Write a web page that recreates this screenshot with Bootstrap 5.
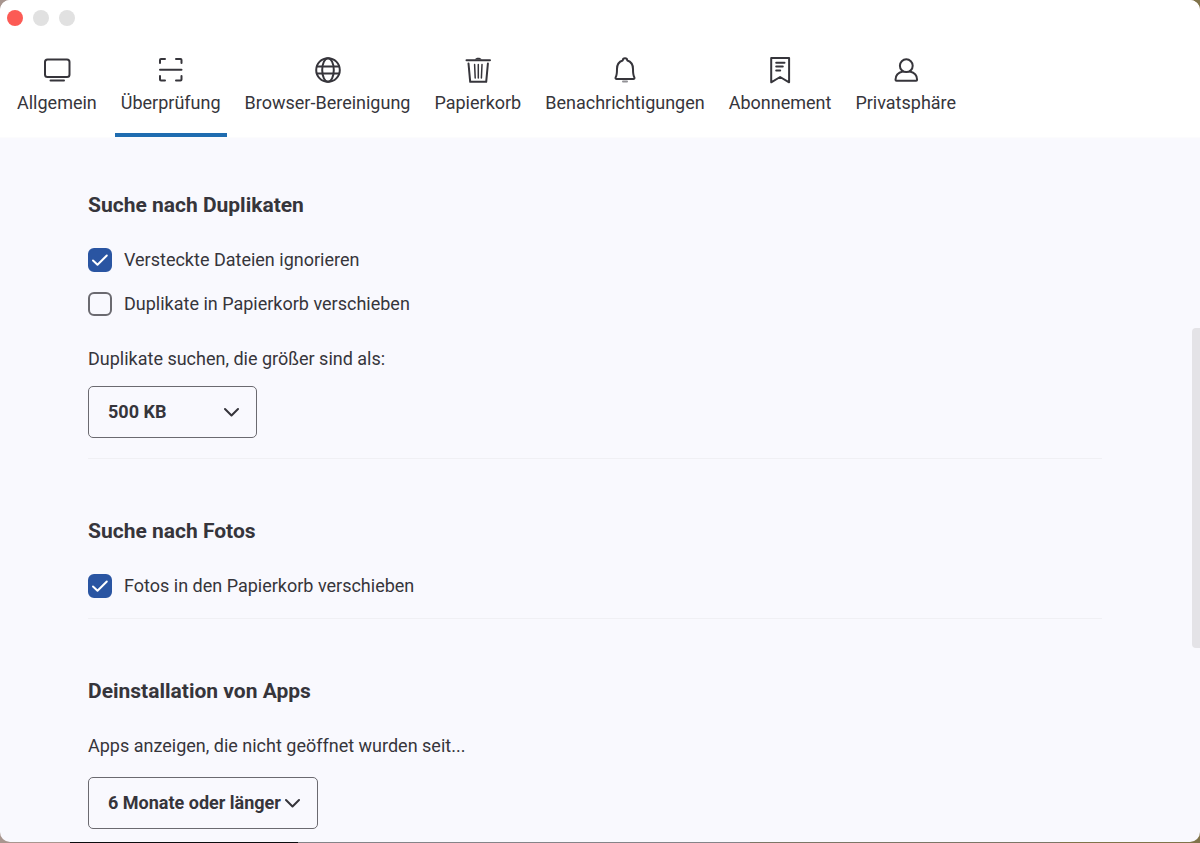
<!DOCTYPE html>
<html lang="de">
<head>
<meta charset="utf-8">
<meta name="viewport" content="width=device-width, initial-scale=1">
<title>Einstellungen</title>
<link href="https://cdn.jsdelivr.net/npm/bootstrap@5.3.0/dist/css/bootstrap.min.css" rel="stylesheet">
<style>
  :root { --ink: #36353b; --panel: #f9f9fe; --accent: #1f6cb0; --check: #2a55a2; }
  body {
    font: 400 18px/24px Roboto, "Liberation Sans", sans-serif;
    color: var(--ink);
    background: linear-gradient(90deg, #a8968f 0 70px, #0c0c0e 70px 298px, #858488 298px 750px, #7c7666 750px 1060px, #80734a 1060px);
  }
  .app-window { height: calc(100vh - 1px); background: var(--panel); border-radius: 10px; }
  .app-header { background: #fff; border-bottom: 1px solid #fcfcfd; }
  .window-dots { gap: 10px; padding: 10px 7px; }
  .window-dot { width: 16px; height: 16px; background: #e1e1e1; }
  .window-dot.close-dot { background: #fc5b55; }
  .tab-row { gap: 12px; padding: 18px 11px 0; }
  .tab-row .nav-link { color: var(--ink); padding: 0 6px 18px; border-bottom: 4px solid transparent; white-space: nowrap; }
  .tab-row .nav-link.active { border-bottom-color: var(--accent); }
  .tab-row svg { width: 32px; height: 32px; margin-bottom: 5px; fill: none; stroke: var(--ink); stroke-width: 2; stroke-linecap: round; stroke-linejoin: round; }
  .settings { padding: 55px 98px 0 88px; }
  .settings section + section { border-top: 1px solid #f0f0f4; margin-top: 20px; padding-top: 60px; }
  .settings h2 { font-size: 21px; line-height: 24px; font-weight: 700; margin: 0 0 31px; }
  .option { gap: 12px; }
  .option + .option { margin-top: 20px; }
  .option .form-check-input { width: 24px; height: 24px; margin: 0; border: 2px solid #6b6a70; border-radius: 6px; background-color: var(--panel); }
  .option .form-check-input:checked {
    border-color: var(--check); background-color: var(--check);
    background-size: 20px 20px;
    background-image: url("data:image/svg+xml,%3Csvg xmlns='http://www.w3.org/2000/svg' viewBox='0 0 20 20'%3E%3Cpath fill='none' stroke='%23fff' stroke-width='2' stroke-linecap='round' stroke-linejoin='round' d='M3 10.5l4.500 4.300L16.800 5.500'/%3E%3C/svg%3E");
  }
  .option + .field { margin-top: 31px; }
  .field label { margin-bottom: 15px; }
  .field-age label { margin-bottom: 19px; }
  .field .form-select {
    width: 169px; height: 52px; padding: 0 0 0 19px; font-size: 18px; line-height: 24px; font-weight: 700; color: var(--ink);
    border: 1px solid #6b6a70; border-radius: 5px; background-color: transparent;
    background-size: 16px 16px; background-position: right 16px center;
    background-image: url("data:image/svg+xml,%3Csvg xmlns='http://www.w3.org/2000/svg' viewBox='0 0 16 16'%3E%3Cpath fill='none' stroke='%2336353b' stroke-width='2' stroke-linecap='round' stroke-linejoin='round' d='M1 5l6.500 6.500L14 5'/%3E%3C/svg%3E");
  }
  .field-age .form-select { width: 230px; }
  .scroll-thumb { top: 39%; right: 0; width: 8px; height: 38%; background: #e4e3e7; border-radius: 4px 0 0 4px; }
</style>
</head>
<body>
<div class="app-window position-relative overflow-hidden d-flex flex-column">
  <header class="app-header">
    <div class="window-dots d-flex">
      <span class="window-dot close-dot rounded-circle"></span>
      <span class="window-dot rounded-circle"></span>
      <span class="window-dot rounded-circle"></span>
    </div>
    <nav class="tab-row nav flex-nowrap" aria-label="Einstellungen">
      <a class="nav-link d-flex flex-column align-items-center" href="#">
        <svg viewBox="0 0 32 32"><rect x="4" y="5.500" width="24.500" height="17.500" rx="2.500"/><path d="M9.500 26.500H23"/></svg>
        Allgemein</a>
      <a class="nav-link active d-flex flex-column align-items-center" href="#" aria-current="page">
        <svg viewBox="0 0 32 32"><path d="M5 9V6q0-1 1-1h4M21 5h4.500q1 0 1 1v3M5 22v3.500q0 1 1 1h4M21 26.500h4.500q1 0 1-1V22M5 15.700h21.500"/></svg>
        Überprüfung</a>
      <a class="nav-link d-flex flex-column align-items-center" href="#">
        <svg viewBox="0 0 32 32"><circle cx="16" cy="16" r="11.800"/><ellipse cx="16" cy="16" rx="5.800" ry="11.800"/><path d="M5 12.600h22M5 19.600h22"/></svg>
        Browser-Bereinigung</a>
      <a class="nav-link d-flex flex-column align-items-center" href="#">
        <svg viewBox="0 0 32 32"><path d="M4.500 6.200h23.500M6.500 9.500l1.700 18.300h16l1.700-18.300"/><path d="M12.600 10.500l.6 13.500M16.300 10.500V24M20 10.500l-.6 13.500" stroke-width="1.500"/><path d="M13 5.500c.5-2.200 6-2.200 6.500 0z" fill="#36353b" stroke="none"/></svg>
        Papierkorb</a>
      <a class="nav-link d-flex flex-column align-items-center" href="#">
        <svg viewBox="0 0 32 32"><path d="M16 4.300c-1.500 0-2.200.8-2.300 2.200-4 1.200-5.700 4.500-5.700 8.500 0 4.500-.3 6.500-1.300 8.200-.5 1 0 1.800 1 1.800h16.600c1 0 1.500-.8 1-1.800-1-1.700-1.300-3.700-1.300-8.200 0-4-1.700-7.300-5.700-8.500-.1-1.400-.8-2.200-2.300-2.200z"/><path d="M14 27.500h4" stroke="#929196"/></svg>
        Benachrichtigungen</a>
      <a class="nav-link d-flex flex-column align-items-center" href="#">
        <svg viewBox="0 0 32 32"><path d="M7.200 4h17.900v24.300L16.100 23l-8.900 5.300zM12.200 8.800h8.300M12.200 12.600h6.600M12.200 16.600h4"/></svg>
        Abonnement</a>
      <a class="nav-link d-flex flex-column align-items-center" href="#">
        <svg viewBox="0 0 32 32"><circle cx="16.300" cy="11.700" r="6.400"/><path d="M12.800 17.400c-4.500.9-7.300 3.500-7.300 8.300 0 .7.300 1.100 1 1.100h19.600c.7 0 1-.4 1-1.100 0-4.800-2.800-7.400-7.300-8.300"/></svg>
        Privatsphäre</a>
    </nav>
  </header>

  <main class="settings flex-grow-1">
    <section>
      <h2>Suche nach Duplikaten</h2>
      <div class="option d-flex align-items-center">
        <input class="form-check-input" type="checkbox" id="hidden-files" checked>
        <label for="hidden-files">Versteckte Dateien ignorieren</label>
      </div>
      <div class="option d-flex align-items-center">
        <input class="form-check-input" type="checkbox" id="dup-trash">
        <label for="dup-trash">Duplikate in Papierkorb verschieben</label>
      </div>
      <div class="field">
        <label class="d-block" for="min-size">Duplikate suchen, die größer sind als:</label>
        <select class="form-select" id="min-size"><option>500 KB</option></select>
      </div>
    </section>
    <section>
      <h2>Suche nach Fotos</h2>
      <div class="option d-flex align-items-center">
        <input class="form-check-input" type="checkbox" id="photo-trash" checked>
        <label for="photo-trash">Fotos in den Papierkorb verschieben</label>
      </div>
    </section>
    <section>
      <h2>Deinstallation von Apps</h2>
      <div class="field field-age">
        <label class="d-block" for="app-age">Apps anzeigen, die nicht geöffnet wurden seit...</label>
        <select class="form-select" id="app-age"><option>6 Monate oder länger</option></select>
      </div>
    </section>
  </main>
  <div class="scroll-thumb position-absolute"></div>
</div>
<script src="https://cdn.jsdelivr.net/npm/bootstrap@5.3.0/dist/js/bootstrap.bundle.min.js"></script>
</body>
</html>
